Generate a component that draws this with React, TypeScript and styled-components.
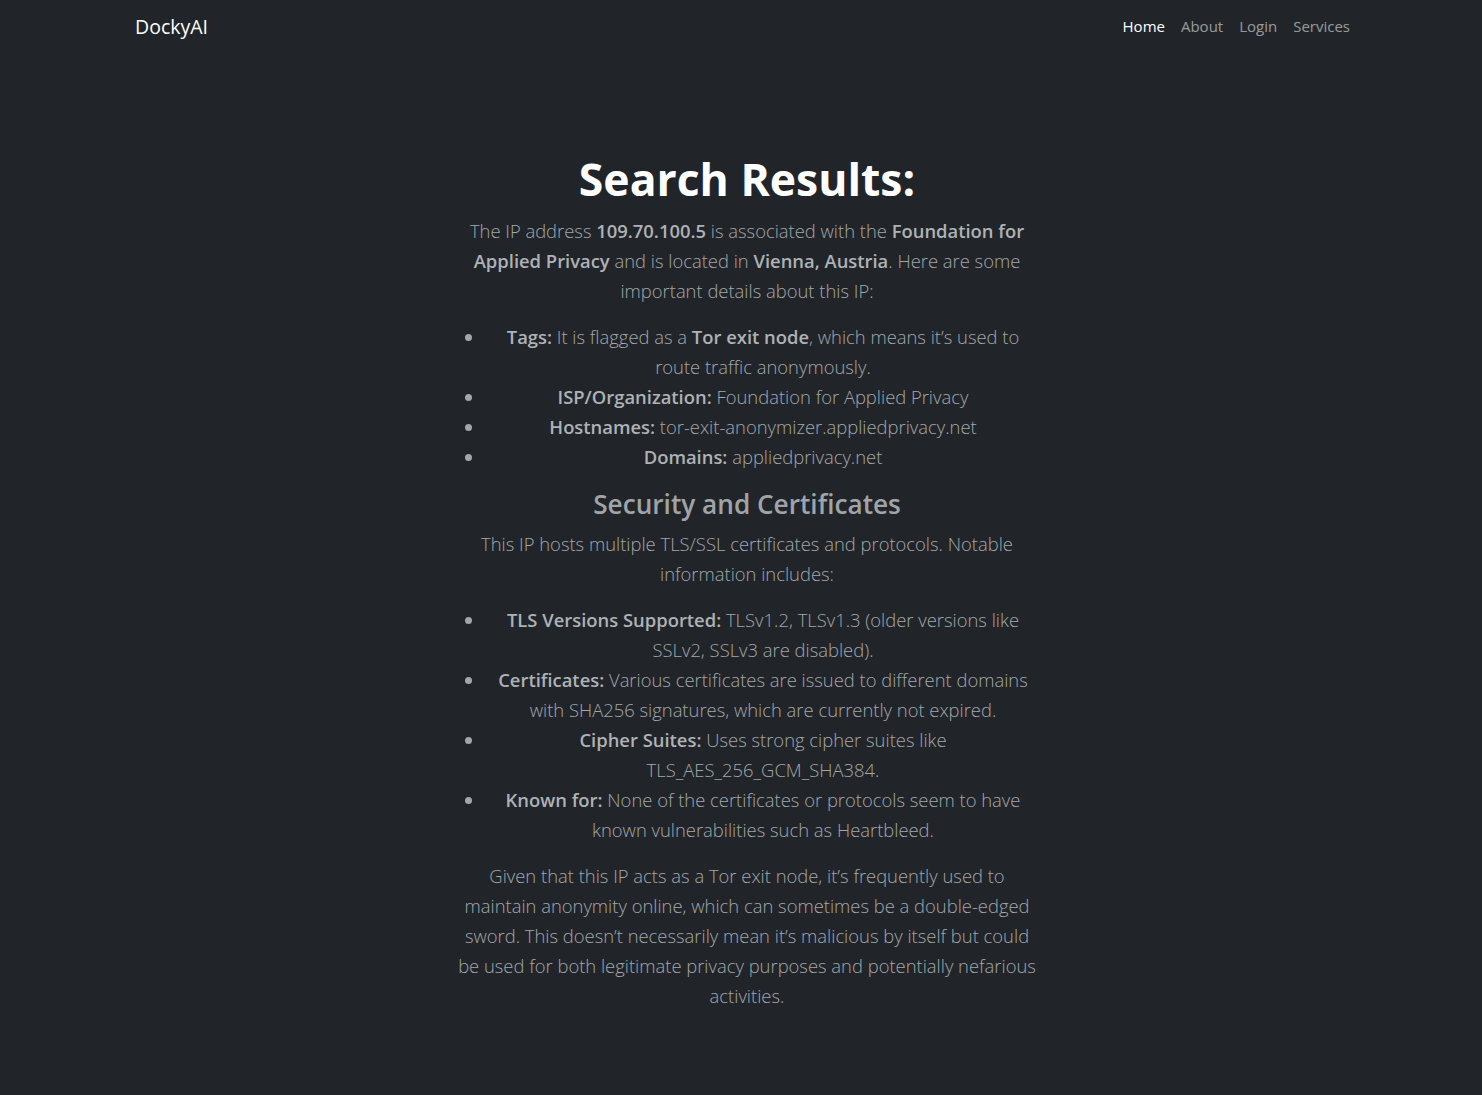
import styled, { createGlobalStyle } from 'styled-components';

const GlobalStyle = createGlobalStyle`
  * { box-sizing: border-box; }
  html, body {
    margin: 0;
    background: #212529;
    font-family: "Open Sans", "Noto Sans", sans-serif;
    color: #a3a7ab;
  }
`;

const navLinks = ['Home', 'About', 'Login', 'Services'];

const firstList = [
  { label: 'Tags:', body: <>It is flagged as a <b>Tor exit node</b>, which means it’s used to route traffic anonymously.</> },
  { label: 'ISP/Organization:', body: <>Foundation for Applied Privacy</> },
  { label: 'Hostnames:', body: <>tor-exit-anonymizer.appliedprivacy.net</> },
  { label: 'Domains:', body: <>appliedprivacy.net</> },
];

const secondList = [
  { label: 'TLS Versions Supported:', body: <>TLSv1.2, TLSv1.3 (older versions like SSLv2, SSLv3 are disabled).</> },
  { label: 'Certificates:', body: <>Various certificates are issued to different domains with SHA256 signatures, which are currently not expired.</> },
  { label: 'Cipher Suites:', body: <>Uses strong cipher suites like TLS_AES_256_GCM_SHA384.</> },
  { label: 'Known for:', body: <>None of the certificates or protocols seem to have known vulnerabilities such as Heartbleed.</> },
];

function App() {
  return (
    <>
      <GlobalStyle />
      <Navbar>
        <Brand>DockyAI</Brand>
        <NavList>
          {navLinks.map((link, i) => (
            <NavLink key={link} $active={i === 0}>{link}</NavLink>
          ))}
        </NavList>
      </Navbar>
      <Main>
        <Result>
          <Title>Search Results:</Title>
          <Lead>
            The IP address <b>109.70.100.5</b> is associated with the <b>Foundation for Applied Privacy</b> and is
            located in <b>Vienna, Austria</b>. Here are some important details about this IP:
          </Lead>
          <List>
            {firstList.map((item) => (
              <li key={item.label}><b>{item.label}</b> {item.body}</li>
            ))}
          </List>
          <SubTitle>Security and Certificates</SubTitle>
          <Lead>This IP hosts multiple TLS/SSL certificates and protocols. Notable information includes:</Lead>
          <List>
            {secondList.map((item) => (
              <li key={item.label}><b>{item.label}</b> {item.body}</li>
            ))}
          </List>
          <Lead>
            Given that this IP acts as a Tor exit node, it’s frequently used to maintain anonymity online, which can
            sometimes be a double-edged sword. This doesn’t necessarily mean it’s malicious by itself but could be used
            for both legitimate privacy purposes and potentially nefarious activities.
          </Lead>
        </Result>
      </Main>
    </>
  );
}

const Navbar = styled.nav`
  display: flex;
  align-items: center;
  justify-content: space-between;
  height: 52px;
  padding: 0 124px 0 135px;
`;

const Brand = styled.a`
  font-size: 19.5px;
  color: #fff;
  cursor: pointer;
`;

const NavList = styled.div`
  display: flex;
  align-items: center;
`;

const NavLink = styled.a<{ $active?: boolean }>`
  padding: 8px;
  font-size: 15px;
  color: ${({ $active }) => ($active ? '#fff' : 'rgba(255, 255, 255, 0.55)')};
  cursor: pointer;
`;

const Main = styled.main`
  display: flex;
  justify-content: center;
  padding: 98px 0 60px 12px;
`;

const Result = styled.section`
  width: 588px;
  text-align: center;

  b {
    font-weight: 600;
    color: #aeb2b6;
  }
`;

const Title = styled.h1`
  margin: 0 0 8px;
  font-size: 44.5px;
  line-height: 57.6px;
  font-weight: 700;
  color: #fff;
`;

const SubTitle = styled.h3`
  margin: 0 0 8px;
  font-size: 26.2px;
  line-height: 33.6px;
  font-weight: 600;
  color: #a0a4a8;
`;

const Lead = styled.p`
  margin: 0 0 16px;
  font-size: 18.4px;
  line-height: 30px;
  font-weight: 300;
`;

const List = styled.ul`
  margin: 0 0 16px;
  padding-left: 32px;
  font-size: 18.4px;
  line-height: 30px;
  font-weight: 300;

  li::marker {
    color: #a3a7ab;
  }
`;

export default App;
